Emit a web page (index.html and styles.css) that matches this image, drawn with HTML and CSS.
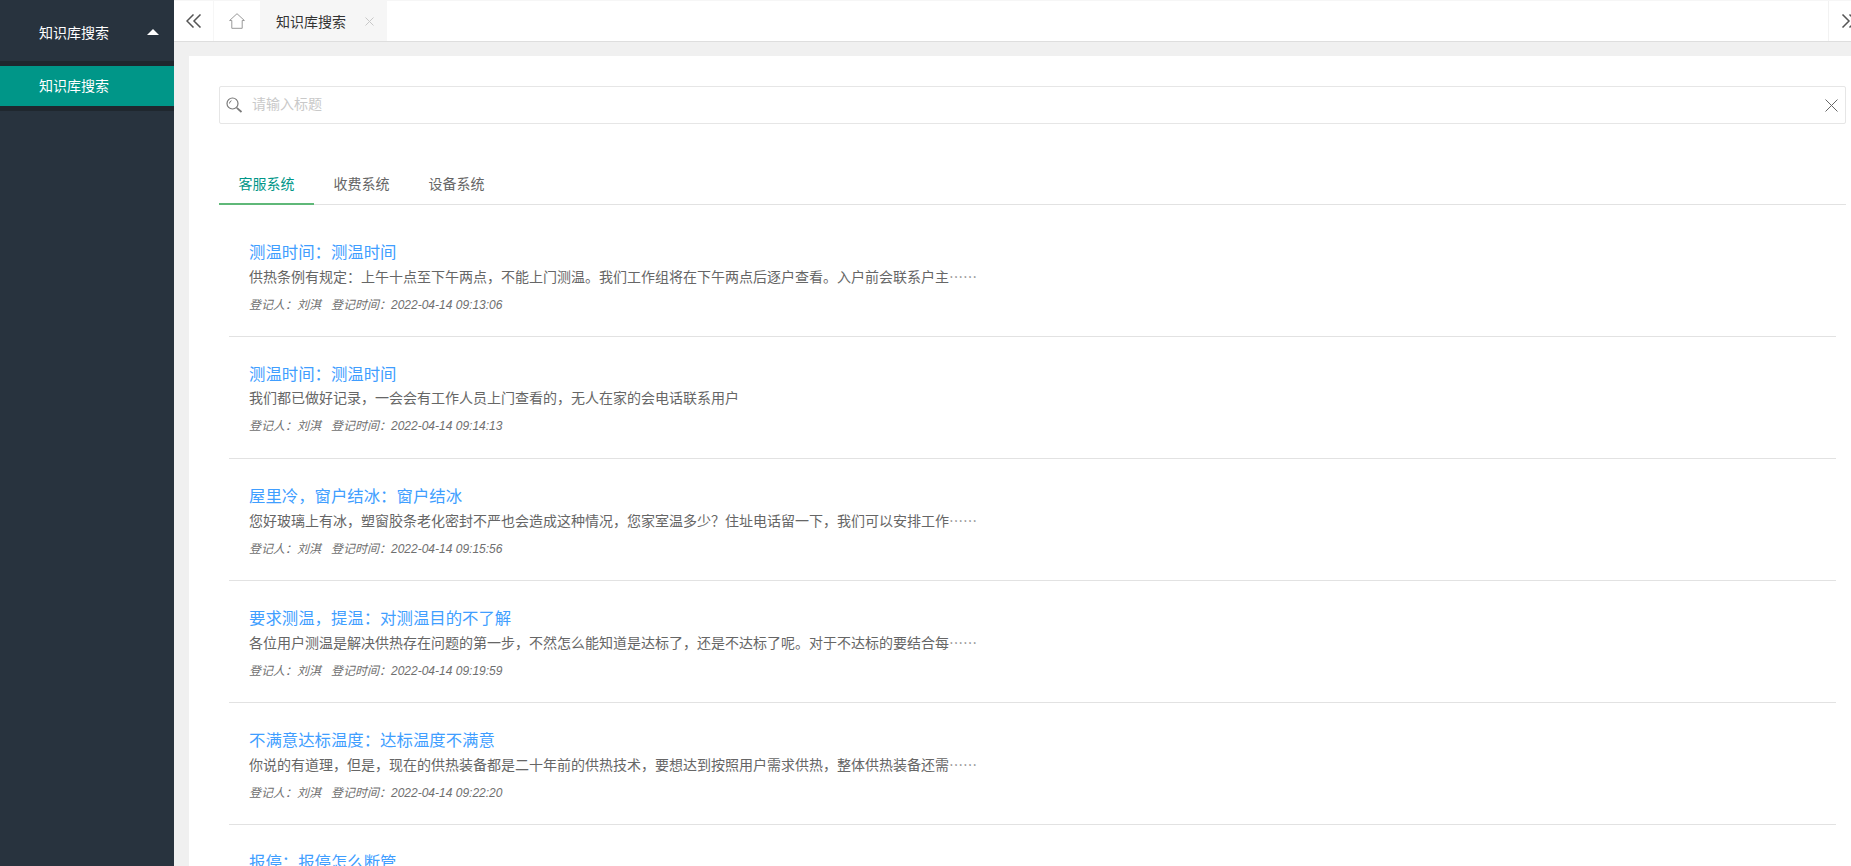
FILE: index.html
```html
<!DOCTYPE html>
<html lang="zh-CN">
<head>
<meta charset="utf-8">
<title>知识库搜索</title>
<link rel="stylesheet" href="styles.css">
</head>
<body>
<div class="app">
  <aside class="sidebar">
    <div class="nav-head"><span>知识库搜索</span><i class="caret"></i></div>
    <div class="nav-sub"><a class="nav-item">知识库搜索</a></div>
  </aside>
  <main class="main">
    <header class="topbar">
      <button class="tb-btn tb-left"><svg width="16" height="14" viewBox="0 0 16 14"><path d="M7.500 .5 1 7l6.500 6.500M14.500 .5 8 7l6.500 6.500" fill="none" stroke="#555" stroke-width="1.500"/></svg></button>
      <button class="tb-home"><svg width="16" height="16" viewBox="0 0 16 16"><path d="M.6 7.500 8 .7l7.400 6.800h-2.200v7.800H2.800V7.500z" fill="none" stroke="#999" stroke-width="1"/></svg></button>
      <div class="tab-open"><span>知识库搜索</span><svg width="9" height="9" viewBox="0 0 9 9"><path d="M.5 .5l8 8M8.500 .5l-8 8" stroke="#c8c8c8" stroke-width="1"/></svg></div>
      <div class="tb-fill"></div>
      <button class="tb-btn tb-right"><svg width="16" height="14" viewBox="0 0 16 14"><path d="M1.500 .5 8 7l-6.500 6.500M8.500 .5 15 7l-6.500 6.500" fill="none" stroke="#555" stroke-width="1.500"/></svg></button>
    </header>
    <div class="body-wrap">
      <section class="panel">
        <div class="search">
          <svg class="s-icon" width="17" height="17" viewBox="0 0 17 17"><circle cx="6.500" cy="6.500" r="5.500" fill="none" stroke="#7a7a7a" stroke-width="1.200"/><path d="M3.500 6.500a3 3 0 0 1 2-2.800" fill="none" stroke="#7a7a7a"/><path d="M10.800 10.800l4.700 4.200" stroke="#7a7a7a" stroke-width="1.800"/></svg>
          <span class="s-text">请输入标题</span>
          <svg class="s-clear" width="13" height="13" viewBox="0 0 13 13"><path d="M.5 .5l12 12M12.500 .5l-12 12" stroke="#666" stroke-width="1"/></svg>
        </div>
        <nav class="tabs">
          <a class="tab tab-on">客服系统</a>
          <a class="tab">收费系统</a>
          <a class="tab">设备系统</a>
        </nav>
        <ul class="list">
          <li class="item">
            <a class="title">测温时间：测温时间</a>
            <p class="desc">供热条例有规定：上午十点至下午两点，不能上门测温。我们工作组将在下午两点后逐户查看。入户前会联系户主<span class="dots">……</span></p>
            <p class="meta">登记人：刘淇&nbsp;&nbsp;&nbsp;登记时间：2022-04-14 09:13:06</p>
          </li>
          <li class="item">
            <a class="title">测温时间：测温时间</a>
            <p class="desc">我们都已做好记录，一会会有工作人员上门查看的，无人在家的会电话联系用户</p>
            <p class="meta">登记人：刘淇&nbsp;&nbsp;&nbsp;登记时间：2022-04-14 09:14:13</p>
          </li>
          <li class="item">
            <a class="title">屋里冷，窗户结冰：窗户结冰</a>
            <p class="desc">您好玻璃上有冰，塑窗胶条老化密封不严也会造成这种情况，您家室温多少？住址电话留一下，我们可以安排工作<span class="dots">……</span></p>
            <p class="meta">登记人：刘淇&nbsp;&nbsp;&nbsp;登记时间：2022-04-14 09:15:56</p>
          </li>
          <li class="item">
            <a class="title">要求测温，提温：对测温目的不了解</a>
            <p class="desc">各位用户测温是解决供热存在问题的第一步，不然怎么能知道是达标了，还是不达标了呢。对于不达标的要结合每<span class="dots">……</span></p>
            <p class="meta">登记人：刘淇&nbsp;&nbsp;&nbsp;登记时间：2022-04-14 09:19:59</p>
          </li>
          <li class="item">
            <a class="title">不满意达标温度：达标温度不满意</a>
            <p class="desc">你说的有道理，但是，现在的供热装备都是二十年前的供热技术，要想达到按照用户需求供热，整体供热装备还需<span class="dots">……</span></p>
            <p class="meta">登记人：刘淇&nbsp;&nbsp;&nbsp;登记时间：2022-04-14 09:22:20</p>
          </li>
          <li class="item">
            <a class="title">报停：报停怎么断管</a>
          </li>
        </ul>
      </section>
    </div>
  </main>
</div>
</body>
</html>
```
FILE: styles.css
```css
* { box-sizing: border-box; }
html, body { margin: 0; height: 100%; overflow: hidden; }
body {
  font-family: "Liberation Sans", "Noto Sans CJK SC", sans-serif;
  font-size: 14px;
  color: #666;
  background: #fff;
}
p, ul { margin: 0; padding: 0; list-style: none; }
button { border: 0; padding: 0; background: #fff; cursor: pointer; }

.app { display: flex; height: 866px; width: 1851px; overflow: hidden; }

.sidebar { width: 174px; flex: none; background: #28333e; color: #fff; }
.nav-head {
  height: 61px;
  padding: 3px 15px 0 39px;
  display: flex;
  align-items: center;
  justify-content: space-between;
  color: #fff;
}
.caret { width: 0; height: 0; border: 6px solid transparent; border-top: 0; border-bottom: 6px solid #fff; }
.nav-sub { background: #1f272e; padding: 5px 0; }
.nav-item { display: block; height: 40px; line-height: 40px; padding-left: 39px; background: #009688; color: #fff; }

.main { flex: 1; min-width: 0; display: flex; flex-direction: column; background: #f0f0f0; }

.topbar {
  height: 42px;
  flex: none;
  display: flex;
  background: #fff;
  border-top: 1px solid #f6f6f6;
  border-bottom: 1px solid #dedede;
}
.tb-btn { width: 40px; flex: none; display: flex; align-items: center; }
.tb-left { justify-content: center; border-right: 1px solid #f6f6f6; }
.tb-right { justify-content: center; border-left: 1px solid #f2f2f2; margin-right: -17px; }
.tb-home { width: 46px; flex: none; display: flex; align-items: center; justify-content: center; }
.tab-open {
  width: 127px;
  flex: none;
  display: flex;
  align-items: center;
  padding-left: 16px;
  gap: 19px;
  background: #f6f6f6;
  color: #333;
  font-size: 14px;
}
.tb-fill { flex: 1; min-width: 0; }

.body-wrap { flex: 1; min-height: 0; padding: 14px 0 0 15px; overflow: hidden; }
.panel { height: 100%; background: #fff; padding: 30px 5px 0 30px; }

.search {
  height: 38px;
  display: flex;
  align-items: center;
  padding: 0 7px 0 6px;
  border: 1px solid #e6e6e6;
  border-radius: 2px;
}
.s-icon { flex: none; }
.s-text { flex: 1; margin-left: 9px; color: #c9c9c9; line-height: 34px; height: 36px; }

.tabs { display: flex; height: 40px; margin-top: 41px; border-bottom: 1px solid #e2e2e2; }
.tab { width: 95px; text-align: center; line-height: 38px; height: 40px; color: #666; }
.tab-on { color: #009688; border-bottom: 2px solid #5fb878; }

.list { padding-left: 10px; padding-right: 10px; }
.item { height: 122px; padding: 25px 0 0 20px; border-bottom: 1px solid #e2e2e2; }
.item:first-child { height: 132px; padding-top: 35px; }
.title { display: block; font-size: 16.400px; line-height: 24px; color: #409eff; }
.desc { margin-top: 1px; line-height: 22px; color: #666; white-space: nowrap; }
.dots { font-family: "Noto Sans CJK SC", sans-serif; color: #888; }
.meta { margin-top: 6px; font-size: 12px; line-height: 22px; font-style: italic; color: #6f6f6f; }
```
